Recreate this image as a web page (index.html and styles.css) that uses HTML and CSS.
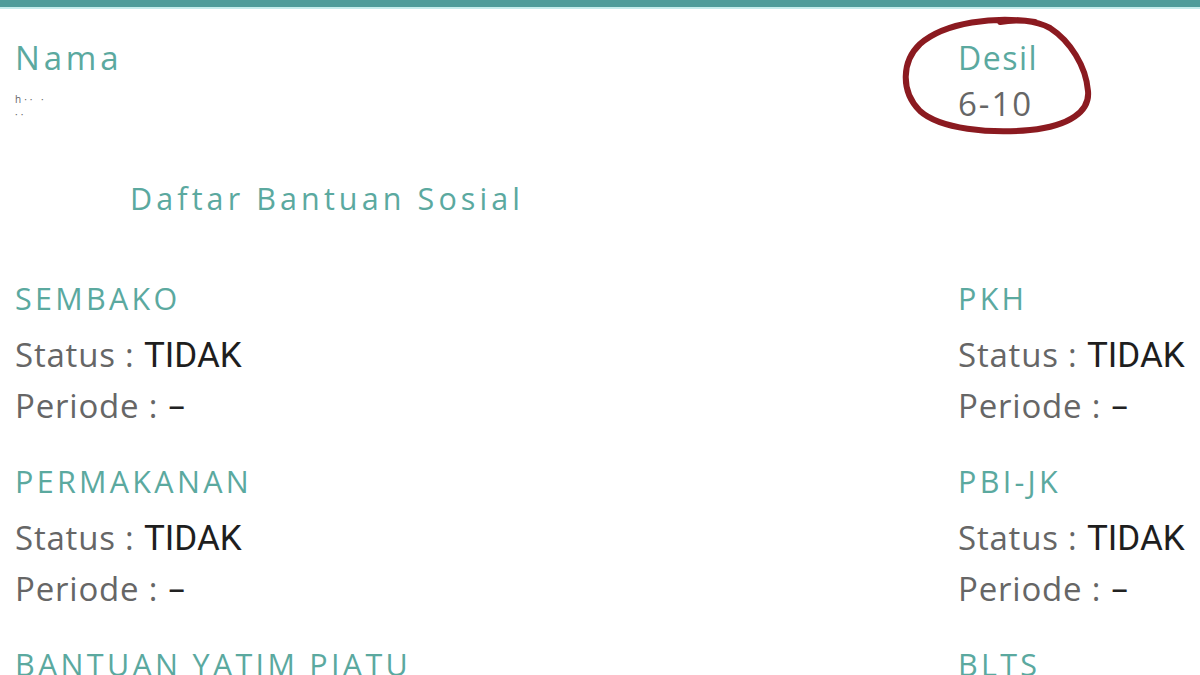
FILE: index.html
```html
<!DOCTYPE html>
<html lang="id">
<head>
<meta charset="utf-8">
<title>Daftar Bantuan Sosial</title>
<link rel="stylesheet" href="styles.css">
</head>
<body>
<div class="topbar"></div>
<main class="page">
  <section class="header">
    <div class="field">
      <div class="label name-label">Nama</div>
      <div class="masked"><span>h·· ·</span><span>··</span></div>
    </div>
    <div class="field">
      <div class="label">Desil</div>
      <div class="value">6-10</div>
    </div>
  </section>

  <h1 class="title">Daftar Bantuan Sosial</h1>

  <section class="grid">
    <div class="item">
      <div class="name">SEMBAKO</div>
      <div class="row">Status : <span class="strong">TIDAK</span></div>
      <div class="row">Periode : <span class="dash">–</span></div>
    </div>
    <div class="item">
      <div class="name">PKH</div>
      <div class="row">Status : <span class="strong">TIDAK</span></div>
      <div class="row">Periode : <span class="dash">–</span></div>
    </div>
    <div class="item">
      <div class="name">PERMAKANAN</div>
      <div class="row">Status : <span class="strong">TIDAK</span></div>
      <div class="row">Periode : <span class="dash">–</span></div>
    </div>
    <div class="item">
      <div class="name">PBI-JK</div>
      <div class="row">Status : <span class="strong">TIDAK</span></div>
      <div class="row">Periode : <span class="dash">–</span></div>
    </div>
    <div class="item">
      <div class="name">BANTUAN YATIM PIATU</div>
    </div>
    <div class="item">
      <div class="name">BLTS</div>
    </div>
  </section>
</main>
<svg class="circle" viewBox="0 0 196 124" width="196" height="124" aria-hidden="true">
  <path d="M135 6 C95 0 45 6 20 28 C2 45 0 75 20 95 C40 113 90 118 130 114 C170 110 190 95 188 75 C186 50 170 25 150 12 C135 4 115 3 100 6"
        fill="none" stroke="#8b1a20" stroke-width="6" stroke-linecap="round" stroke-linejoin="round"/>
</svg>
</body>
</html>
```

FILE: styles.css
```css
* { box-sizing: border-box; }
html, body { margin: 0; padding: 0; }
body {
  position: relative;
  width: 1200px;
  height: 675px;
  overflow: hidden;
  background: #ffffff;
  font-family: "Open Sans", "Liberation Sans", sans-serif;
  color: #666666;
}
.topbar {
  height: 9px;
  background: #4e9c9a;
  border-bottom: 2px solid #c4ecec;
}
.page {
  padding: 0 0 0 15px;
}
.header {
  display: grid;
  grid-template-columns: 943px 1fr;
  padding-top: 29px;
  height: 169px;
}
.label {
  color: #5ba99f;
  font-size: 32px;
  line-height: 40px;
  letter-spacing: 1.5px;
}
.name-label {
  font-size: 33px;
  letter-spacing: 3.8px;
}
.value {
  color: #666666;
  font-size: 33px;
  line-height: 40px;
  margin-top: 6px;
  letter-spacing: 2px;
}
.masked {
  display: flex;
  flex-direction: column;
  color: #3a3a3a;
  font-size: 10px;
  line-height: 15px;
  margin-top: 14px;
  letter-spacing: 3px;
  opacity: 0.8;
}
.circle {
  position: absolute;
  left: 900px;
  top: 16px;
}
.title {
  margin: 0 0 0 115px;
  color: #5ba99f;
  font-weight: 400;
  font-size: 30.5px;
  line-height: 40px;
  letter-spacing: 4.1px;
  height: 100px;
}
.grid {
  display: grid;
  grid-template-columns: 943px 1fr;
  row-gap: 27px;
}
.item { white-space: nowrap; }
.name {
  color: #5ba99f;
  font-size: 30.5px;
  line-height: 40px;
  letter-spacing: 3.3px;
  margin-bottom: 12px;
}
.row {
  font-size: 33px;
  line-height: 50px;
  color: #666666;
  letter-spacing: 0.8px;
}
.strong {
  font-family: Roboto, "Liberation Sans", sans-serif;
  color: #1e1e1e;
  font-size: 35px;
  letter-spacing: 0;
}
.dash {
  font-family: Roboto, "Liberation Sans", sans-serif;
  color: #222222;
  font-size: 28px;
  font-weight: 500;
}
```
